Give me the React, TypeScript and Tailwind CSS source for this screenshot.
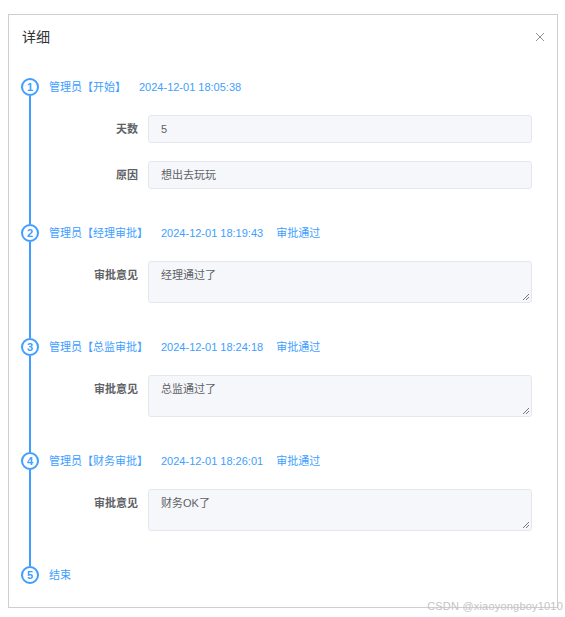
import { type FC, type ReactNode } from 'react';

interface Field {
  label: string;
  value: string;
  multiline?: boolean;
}

interface Step {
  no: number;
  title: string;
  time?: string;
  status?: string;
  fields: Field[];
}

const steps: Step[] = [
  {
    no: 1,
    title: '管理员【开始】',
    time: '2024-12-01 18:05:38',
    fields: [
      { label: '天数', value: '5' },
      { label: '原因', value: '想出去玩玩' },
    ],
  },
  {
    no: 2,
    title: '管理员【经理审批】',
    time: '2024-12-01 18:19:43',
    status: '审批通过',
    fields: [{ label: '审批意见', value: '经理通过了', multiline: true }],
  },
  {
    no: 3,
    title: '管理员【总监审批】',
    time: '2024-12-01 18:24:18',
    status: '审批通过',
    fields: [{ label: '审批意见', value: '总监通过了', multiline: true }],
  },
  {
    no: 4,
    title: '管理员【财务审批】',
    time: '2024-12-01 18:26:01',
    status: '审批通过',
    fields: [{ label: '审批意见', value: '财务OK了', multiline: true }],
  },
  { no: 5, title: '结束', fields: [] },
];

const FONT = "font-['Liberation_Sans','Noto_Sans_CJK_SC',sans-serif]";

/**
 * Textarea resize grip drawn in the bottom right corner
 */
const Grip: FC = () => (
  <svg className="absolute right-[1px] bottom-[1px] w-[8px] h-[8px]" viewBox="0 0 8 8" aria-hidden="true">
    <path d="M7 1L1 7M7 4L4 7" stroke="#777" strokeWidth="1" />
  </svg>
);

const FormItem: FC<{ field: Field }> = ({ field }) => (
  <div className="flex mb-[18px]">
    <div className="w-[99px] shrink-0 pr-[10px] text-right text-[11px] leading-[28px] font-semibold text-[#606266]">
      {field.label}
    </div>
    {field.multiline ? (
      <div className="relative flex-1 h-[42px] rounded-[3px] border border-[#e4e7ed] bg-[#f5f7fa] px-[12px] py-[4px] text-[11px] leading-[18px] text-[#606266]">
        {field.value}
        <Grip />
      </div>
    ) : (
      <div className="flex-1 h-[28px] rounded-[3px] border border-[#e4e7ed] bg-[#f5f7fa] px-[12px] text-[11px] leading-[26px] text-[#606266]">
        {field.value}
      </div>
    )}
  </div>
);

const StepRow: FC<{ step: Step; last: boolean; children?: ReactNode }> = ({ step, last, children }) => (
  <div className="flex">
    {/* Circle + connecting line */}
    <div className="w-[18px] shrink-0 flex flex-col items-center">
      <div className="w-[18px] h-[18px] rounded-full border-2 border-[#409eff] flex items-center justify-center text-[11px] font-bold text-[#409eff] leading-none">
        {step.no}
      </div>
      {!last && <div className="flex-1 w-[2px] bg-[#409eff]" />}
    </div>
    <div className={`flex-1 pl-[10px] ${last ? '' : 'pb-[17px]'}`}>
      <div className="h-[18px] flex items-center text-[11px] text-[#409eff]">
        <span>{step.title}</span>
        {step.time && <span className="ml-[13px]">{step.time}</span>}
        {step.status && <span className="ml-[13px]">{step.status}</span>}
      </div>
      {children}
    </div>
  </div>
);

export default function App() {
  return (
    <div className={`relative min-h-[617px] bg-white pt-[14px] pl-[8px] ${FONT}`}>
      <div className="w-[550px] border border-[#cfcfcf] bg-white">
        {/* Header */}
        <div className="flex items-center justify-between pl-[13px] pr-[12px] pt-[5px] h-[34px] box-content">
          <span className="text-[14px] text-[#303133]">详细</span>
          <svg className="w-[10px] h-[10px]" viewBox="0 0 10 10" aria-hidden="true">
            <path d="M1 1L9 9M9 1L1 9" stroke="#909399" strokeWidth="1" />
          </svg>
        </div>

        {/* Timeline */}
        <div className="pl-[12px] pr-[25px] pt-[24px] pb-[23px]">
          {steps.map((step, i) => (
            <StepRow key={step.no} step={step} last={i === steps.length - 1}>
              {step.fields.length > 0 && (
                <div className="mt-[19px]">
                  {step.fields.map((f) => (
                    <FormItem key={f.label} field={f} />
                  ))}
                </div>
              )}
            </StepRow>
          ))}
        </div>
      </div>

      {/* Watermark */}
      <div className="absolute right-[2px] top-[598px] text-[11px] text-[#c4c4c4] tracking-[0.2px]">
        CSDN @xiaoyongboy1010
      </div>
    </div>
  );
}
